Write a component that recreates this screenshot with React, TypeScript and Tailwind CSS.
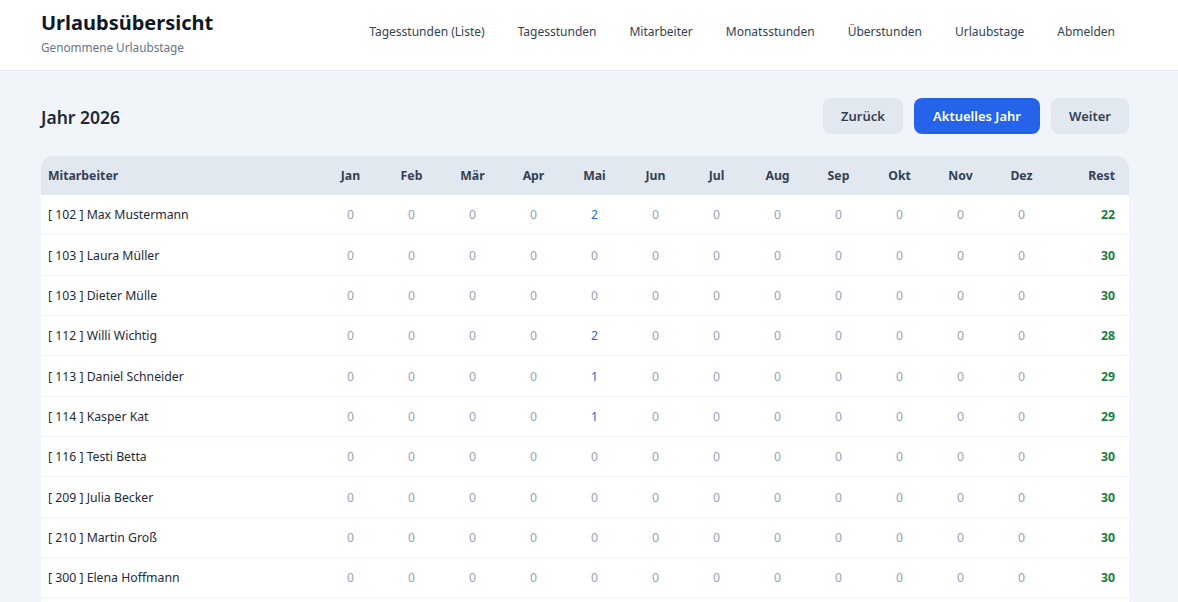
import React from "react";

const months = ["Jan", "Feb", "Mär", "Apr", "Mai", "Jun", "Jul", "Aug", "Sep", "Okt", "Nov", "Dez"];

type Row = { name: string; mai: number; rest: number };

const rows: Row[] = [
  { name: "[ 102 ] Max Mustermann", mai: 2, rest: 22 },
  { name: "[ 103 ] Laura Müller", mai: 0, rest: 30 },
  { name: "[ 103 ] Dieter Mülle", mai: 0, rest: 30 },
  { name: "[ 112 ] Willi Wichtig", mai: 2, rest: 28 },
  { name: "[ 113 ] Daniel Schneider", mai: 1, rest: 29 },
  { name: "[ 114 ] Kasper Kat", mai: 1, rest: 29 },
  { name: "[ 116 ] Testi Betta", mai: 0, rest: 30 },
  { name: "[ 209 ] Julia Becker", mai: 0, rest: 30 },
  { name: "[ 210 ] Martin Groß", mai: 0, rest: 30 },
  { name: "[ 300 ] Elena Hoffmann", mai: 0, rest: 30 },
];

const nav = ["Tagesstunden (Liste)", "Tagesstunden", "Mitarbeiter", "Monatsstunden", "Überstunden", "Urlaubstage", "Abmelden"];

export default function App() {
  return (
    <div className="min-h-screen bg-[#f1f5f9] font-['Segoe_UI','Noto_Sans',sans-serif]">
      <header className="h-[71px] bg-white border-b border-[#e2e8f0] flex items-center justify-between pl-[41px] pr-[63px]">
        <div className="flex flex-col">
          <h1 className="text-[20px] leading-[26px] font-bold text-[#0f172a] mt-[-4px]">Urlaubsübersicht</h1>
          <p className="text-[11.75px] leading-[18px] text-[#64748b] mt-[2px]">Genommene Urlaubstage</p>
        </div>
        <nav className="flex items-center gap-[33px] mt-[-7px]">
          {nav.map((n) => (
            <span key={n} className="text-[12px] text-[#334155]">{n}</span>
          ))}
        </nav>
      </header>

      <main className="pl-[41px] pr-[49px] pt-[27px]">
        <div className="flex items-center justify-between">
          <h2 className="text-[17.5px] font-semibold text-[#1e293b] mt-[3px]">Jahr 2026</h2>
          <div className="flex gap-[11px]">
            <button className="h-9 w-[80px] rounded-lg bg-[#e2e8f0] text-[#334155] text-[13px] font-semibold pt-[1px]">Zurück</button>
            <button className="h-9 w-[126px] rounded-lg bg-[#2563eb] text-white text-[13px] font-semibold pt-[1px]">Aktuelles Jahr</button>
            <button className="h-9 w-[78px] rounded-lg bg-[#e2e8f0] text-[#334155] text-[13px] font-semibold pt-[1px]">Weiter</button>
          </div>
        </div>

        <div className="mt-[22px] rounded-t-xl overflow-hidden bg-white pb-[8px]">
          <div className="grid grid-cols-[279px_repeat(12,61px)_77px] h-[39px] items-center bg-[#e2e8f0] text-[12.25px] font-bold text-[#334155] pt-[2px]">
            <div className="pl-[7px]">Mitarbeiter</div>
            {months.map((m) => (
              <div key={m} className="text-center">{m}</div>
            ))}
            <div className="text-right pr-[14px]">Rest</div>
          </div>
          {rows.map((r, i) => (
            <div
              key={i}
              className="grid grid-cols-[279px_repeat(12,61px)_77px] h-[40.33px] items-center border-b border-[#f1f5f9] text-[12.25px] pt-[2px]"
            >
              <div className="pl-[7px] text-[#1e293b]">{r.name}</div>
              {months.map((m, j) => {
                const v = j === 4 ? r.mai : 0;
                return (
                  <div key={m} className={v > 0 ? "text-center text-[#2563eb]" : "text-center text-[#94a3b8]"}>
                    {v}
                  </div>
                );
              })}
              <div className="text-right pr-[14px] font-bold text-[#15803d]">{r.rest}</div>
            </div>
          ))}
        </div>
      </main>
    </div>
  );
}
